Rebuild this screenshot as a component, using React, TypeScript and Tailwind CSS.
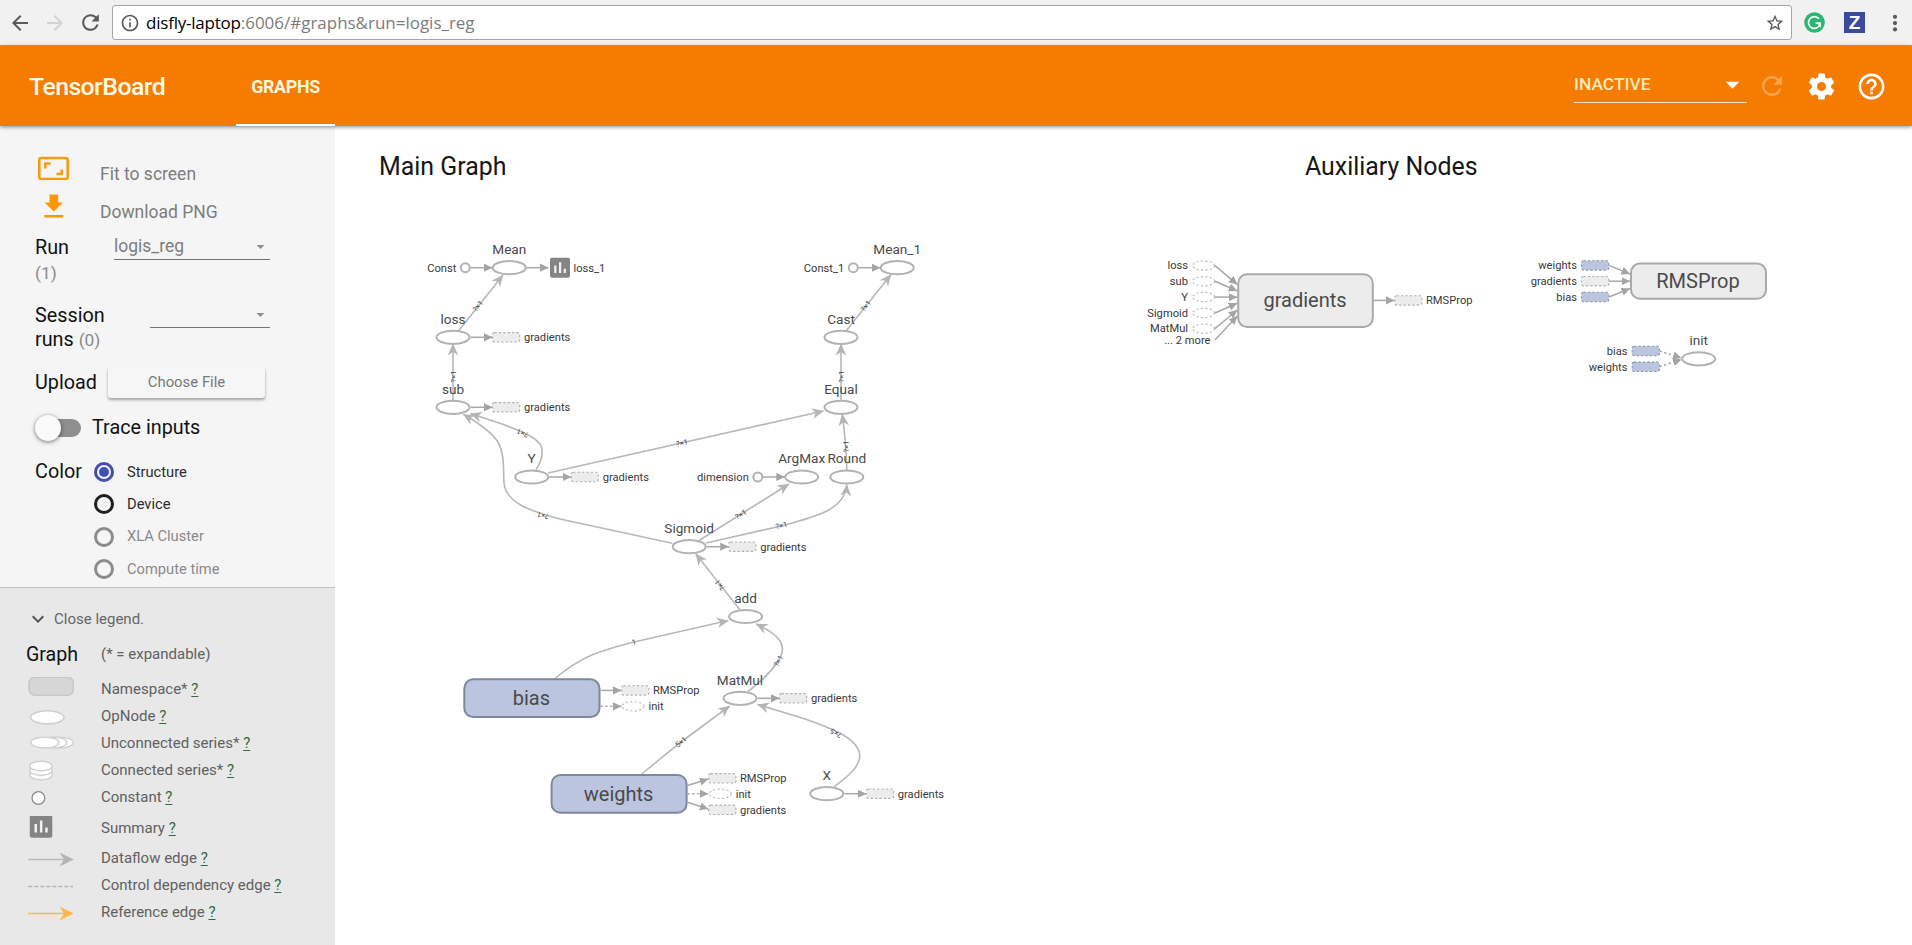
import React from "react";
import {
  MdArrowBack,
  MdArrowForward,
  MdArrowDropDown,
  MdExpandMore,
  MdHelpOutline,
  MdInfoOutline,
  MdRefresh,
  MdStarBorder,
} from "react-icons/md";

const GEAR =
  "M19.43 12.98c.04-.32.07-.64.07-.98s-.03-.66-.07-.98l2.11-1.65c.19-.15.24-.42.12-.64l-2-3.46c-.12-.22-.39-.3-.61-.22l-2.49 1c-.52-.4-1.08-.73-1.69-.98l-.38-2.65C14.46 2.18 14.25 2 14 2h-4c-.25 0-.46.18-.49.42l-.38 2.65c-.61.25-1.17.59-1.69.98l-2.49-1c-.23-.09-.49 0-.61.22l-2 3.46c-.13.22-.07.49.12.64l2.11 1.65c-.04.32-.07.65-.07.98s.03.66.07.98l-2.11 1.65c-.19.15-.24.42-.12.64l2 3.46c.12.22.39.3.61.22l2.49-1c.52.4 1.08.73 1.69.98l.38 2.65c.03.24.24.42.49.42h4c.25 0 .46-.18.49-.42l.38-2.65c.61-.25 1.17-.59 1.69-.98l2.49 1c.23.09.49 0 .61-.22l2-3.46c.12-.22.07-.49-.12-.64l-2.11-1.65zM12 15.5c-1.93 0-3.5-1.57-3.5-3.5s1.57-3.5 3.5-3.5 3.5 1.57 3.5 3.5-1.57 3.5-3.5 3.5z";

/* ---------- Browser toolbar ---------- */

function BrowserBar() {
  return (
    <div className="flex h-[46px] shrink-0 items-center border-b border-[#a9a9a9] bg-[#f1f1f1] text-[#5a5a5a]">
      <MdArrowBack className="ml-2 size-6 shrink-0" />
      <MdArrowForward className="ml-[11px] size-6 shrink-0 text-[#d2d2d2]" />
      <MdRefresh className="ml-[11px] size-[25px] shrink-0" />
      <div className="ml-[9px] flex h-[35px] w-[1680px] shrink-0 items-center rounded-[3px] border border-[#a6a6a6] bg-white">
        <MdInfoOutline className="ml-[7px] size-[20px] shrink-0" />
        <span className="ml-[6px] font-['Open_Sans','Noto_Sans',sans-serif] text-[17px] leading-none tracking-[-0.02px] whitespace-nowrap text-[#7c7c7c]">
          <span className="tracking-[-0.22px] text-black">disfly-laptop</span>:6006/#graphs&amp;run=logis_reg
        </span>
        <MdStarBorder className="mr-[6px] ml-auto size-[20px] shrink-0" />
      </div>
      <svg className="ml-[12px] size-[21px] shrink-0" viewBox="0 0 21 21">
        <circle cx="10.5" cy="10.5" r="10.3" fill="#2bb673" />
        <path d="M15 6.8A5.9 5.9 0 1 0 16 12.4V11.2H11.6" fill="none" stroke="#fff" strokeWidth="1.7" />
        <path d="M13.2 12.4h3.6v3.4z" fill="#fff" />
      </svg>
      <div className="ml-[19px] flex size-[21px] shrink-0 items-center justify-center bg-[#3c4a9e] font-['Liberation_Sans',sans-serif] text-[19px] leading-none font-bold text-white">
        Z
      </div>
      <svg className="ml-[26px] h-[18px] w-[8px] shrink-0" viewBox="0 0 8 18" fill="#5a5a5a">
        <circle cx="4" cy="2.8" r="2.1" />
        <circle cx="4" cy="9.1" r="2.1" />
        <circle cx="4" cy="15.4" r="2.1" />
      </svg>
    </div>
  );
}

/* ---------- App header ---------- */

function Header() {
  return (
    <header className="relative z-10 flex h-20 shrink-0 items-center bg-[#f57c00] text-white shadow-[0_1px_4px_rgba(0,0,0,0.45)]">
      <h1 className="ml-[29px] w-[207px] pt-[2px] text-[24.8px] leading-none font-medium tracking-[-0.55px] text-[#fffbea]">
        TensorBoard
      </h1>
      <div className="flex h-full w-[99px] items-center justify-center border-b-2 border-white pt-[4px] text-[17.8px] leading-none font-bold tracking-[-0.3px] text-[#fff6de]">
        GRAPHS
      </div>
      <div className="ml-auto flex h-[34px] w-[173px] items-center border-b border-[#fde3c4] pb-[2px]">
        <span className="pt-px text-[17.4px] leading-none font-medium text-[#ffe7bd]">INACTIVE</span>
        <MdArrowDropDown className="mr-[-2px] ml-auto size-[33px]" />
      </div>
      <MdRefresh className="ml-[10px] size-[30px] text-white/30" />
      <svg className="ml-[19px] size-[31px]" viewBox="0 0 24 24" fill="currentColor">
        <path d={GEAR} />
      </svg>
      <MdHelpOutline className="mr-[25px] ml-[19px] size-[31px]" />
    </header>
  );
}

/* ---------- Sidebar ---------- */

function Radio({ label, state }: { label: string; state: "on" | "off" | "disabled" }) {
  const ring =
    state === "on" ? "border-[#4150ab]" : state === "off" ? "border-[#202020]" : "border-[#8c8c8c]";
  return (
    <div className="flex h-[32.3px] items-center">
      <div className={`flex size-5 items-center justify-center rounded-full border-[3px] ${ring}`}>
        {state === "on" && <div className="size-[10px] rounded-full bg-[#3f51b5]" />}
      </div>
      <span
        className={`ml-[13px] text-[14.7px] leading-none ${state === "disabled" ? "text-[#8a8a8a]" : "text-[#2c2c2c]"}`}
      >
        {label}
      </span>
    </div>
  );
}

function Controls() {
  return (
    <div className="flex h-[461px] shrink-0 flex-col pl-[35px] text-[19.8px] leading-[24px] text-[#111]">
      <div className="mt-[30px] flex h-[26px]">
        <svg className="ml-[3px] h-6 w-[31px]" viewBox="0 0 31 24" fill="none" stroke="#f59b16" strokeWidth="2.6">
          <rect x="1.3" y="2" width="28.4" height="21" rx="2" />
          <path d="M7.3 12.5V7.5H12.6M23.7 13.5V18H18.4" />
        </svg>
        <span className="mt-[6px] ml-[31px] text-[17.5px] text-[#7d7d7d]">Fit to screen</span>
      </div>
      <div className="mt-[11px] flex h-[26px]">
        <svg className="ml-[9px] h-[26px] w-[20px]" viewBox="0 0 20 26" fill="#ff9800">
          <path d="M5.5 1.5h8.6v8H19L9.8 18.6.6 9.5h4.9zM.3 22h19v2.6H.3z" />
        </svg>
        <span className="mt-[7px] ml-[36px] text-[17.5px] text-[#7d7d7d]">Download PNG</span>
      </div>
      <div className="mt-[15px] flex h-[68px]">
        <div className="mt-[2px] w-[79px]">
          Run
          <div className="mt-[1px] text-[17.3px] text-[#8a8a8a]">(1)</div>
        </div>
        <div className="flex h-[26px] w-[156px] items-center border-b border-[#757575] pb-[1px] text-[17.5px] text-[#7d7d7d]">
          logis_reg
          <MdArrowDropDown className="mr-0 ml-auto size-[19px] text-[#8f8f8f]" />
        </div>
      </div>
      <div className="flex h-[63px]">
        <div className="mt-[2px] w-[115px]">
          Session
          <br />
          runs <span className="text-[17.3px] text-[#8a8a8a]">(0)</span>
        </div>
        <div className="flex h-[26px] w-[120px] items-center border-b border-[#757575] pb-[1px]">
          <MdArrowDropDown className="ml-auto size-[19px] text-[#8f8f8f]" />
        </div>
      </div>
      <div className="mt-[1px] flex h-[32px] items-center">
        <span className="w-[73px] pt-[2px]">Upload</span>
        <button className="h-[31px] w-[157px] rounded-[3px] bg-[#f6f6f6] text-[14.9px] leading-none text-[#7a7a7a] shadow-[0_2px_3px_rgba(0,0,0,0.35)]">
          Choose File
        </button>
      </div>
      <div className="mt-[14px] flex h-[32px] items-center">
        <div className="flex h-[18px] w-[46px] items-center rounded-full bg-linear-to-r from-transparent from-30% to-[#8f8f8f] to-30%">
          <div className="size-[26px] shrink-0 rounded-full bg-[#fafafa] shadow-[0_1px_4px_rgba(0,0,0,0.55)]" />
        </div>
        <span className="ml-[11px]">Trace inputs</span>
      </div>
      <div className="mt-[12px] flex">
        <span className="mt-[4px] w-[59px]">Color</span>
        <div className="flex flex-col">
          <Radio label="Structure" state="on" />
          <Radio label="Device" state="off" />
          <Radio label="XLA Cluster" state="disabled" />
          <Radio label="Compute time" state="disabled" />
        </div>
      </div>
    </div>
  );
}

function SummaryGlyph({ x, y, size }: { x: number; y: number; size: number }) {
  return (
    <g transform={`translate(${x} ${y}) scale(${size / 20})`}>
      <rect width="20" height="20" rx="2" fill="#848484" />
      <path d="M4.2 7.8h2.2v7.6H4.2zM9 4.6h2.2v10.8H9zM13.7 11h2.2v4.4h-2.2z" fill="#f2f2f2" />
    </g>
  );
}

function LegendRow({
  label,
  h,
  children,
}: {
  label: string;
  h: string;
  children: React.ReactNode;
}) {
  return (
    <div className={`flex items-center ${h}`}>
      <svg className="h-6 w-[48px]" viewBox="0 0 48 24">
        {children}
      </svg>
      <span className="ml-[27px] text-[15px] leading-none whitespace-nowrap text-[#606060]">
        {label} <a className="text-[#2f6b3f] underline underline-offset-2">?</a>
      </span>
    </div>
  );
}

function Legend() {
  return (
    <div className="flex grow flex-col border-t border-[#c2c2c2] bg-[#e8e8e8] pl-[26px]">
      <div className="mt-[19px] flex h-[24px] items-center text-[15px] leading-none text-[#666]">
        <MdExpandMore className="size-[24px] text-[#555]" />
        <span className="ml-[4px]">Close legend.</span>
      </div>
      <div className="mt-[11px] flex h-[24px] items-center">
        <span className="w-[75px] pt-px text-[19.6px] leading-none text-[#111]">Graph</span>
        <span className="text-[15px] leading-none text-[#606060]">(* = expandable)</span>
      </div>
      <div className="mt-[9px] flex flex-col">
        <LegendRow label="Namespace*" h="h-[28px]">
          <rect x="3" y="0.2" width="44.5" height="18" rx="6" fill="#d6d6d6" stroke="#c8c8c8" strokeWidth="1.6" />
        </LegendRow>
        <LegendRow label="OpNode" h="h-[27px]">
          <ellipse cx="21.3" cy="12.3" rx="16.8" ry="6.6" fill="#fff" stroke="#cfcfcf" strokeWidth="1.6" />
        </LegendRow>
        <LegendRow label="Unconnected series*" h="h-[27px]">
          {[33.3, 27, 19].map((cx) => (
            <ellipse key={cx} cx={cx} cy="10.5" rx="14" ry="5.4" fill="#fff" stroke="#cfcfcf" strokeWidth="1.4" />
          ))}
        </LegendRow>
        <LegendRow label="Connected series*" h="h-[27px]">
          {[16, 11.5, 7].map((cy) => (
            <ellipse key={cy} cx="15" cy={cy} rx="11.2" ry="4.8" fill="#fff" stroke="#cfcfcf" strokeWidth="1.4" />
          ))}
        </LegendRow>
        <LegendRow label="Constant" h="h-[27px]">
          <circle cx="12.4" cy="12" r="6.4" fill="#fff" stroke="#888" strokeWidth="1.2" />
        </LegendRow>
        <LegendRow label="Summary" h="h-[34px]">
          <SummaryGlyph x={3.8} y={-0.8} size={22.5} />
        </LegendRow>
        <LegendRow label="Dataflow edge" h="h-[27px]">
          <path d="M2.3 12.5H38" stroke="#b9b9b9" strokeWidth="1.6" />
          <path d="M47.8 12.5L33.5 5.5L38 12.5L33.5 19.5Z" fill="#b4b4b4" />
        </LegendRow>
        <LegendRow label="Control dependency edge" h="h-[27px]">
          <path d="M2.3 12.5H47" stroke="#b5b5b5" strokeWidth="1.4" strokeDasharray="4 2" />
        </LegendRow>
        <LegendRow label="Reference edge" h="h-[27px]">
          <path d="M2.3 12.5H38" stroke="#ffb74d" strokeWidth="1.6" />
          <path d="M47.8 12.5L33.5 5.5L38 12.5L33.5 19.5Z" fill="#ffb74d" />
        </LegendRow>
      </div>
    </div>
  );
}

/* ---------- Graph ---------- */

const OPS: [string, number, number][] = [
  ["Mean", 509.3, 267.7],
  ["loss", 453, 337.3],
  ["sub", 453, 407.3],
  ["Y", 531.7, 477],
  ["Sigmoid", 689.2, 546.7],
  ["ArgMax", 801.7, 477],
  ["Round", 846.8, 477],
  ["Equal", 841, 407.3],
  ["Cast", 841, 337.3],
  ["Mean_1", 897.2, 267.7],
  ["add", 745.6, 616.5],
  ["MatMul", 740, 698.3],
  ["X", 826.8, 793.7],
  ["init", 1698.7, 358.8],
];

const GRADIENT_OUTS: [number, number][] = [
  [453, 337.3],
  [453, 407.3],
  [531.7, 477],
  [689.2, 546.7],
  [740, 698.3],
  [826.8, 793.7],
];

const CONSTS: [string, number, number][] = [
  ["Const", 465.3, 267.7],
  ["Const_1", 853.3, 267.7],
  ["dimension", 757.8, 477],
];

const EDGES = [
  "M458.5 331L503 275",
  "M453 400.5V344",
  "M536 469.5C541 462 544 454 541 446C536 436 517 430 505 425L470.5 413.5",
  "M672.3 543.3L560 519C530 511 506 503 504 483C503 468 505 455 498 442C490 430 475 421 463.3 414.3",
  "M548 473L823.5 411",
  "M846.8 470C846.5 450 845 435 842.3 414.3",
  "M841 400.5V344",
  "M846 331L891 274.5",
  "M699 540.5L789 484",
  "M706 543L781 526C815 517 845 510 846.8 484.5",
  "M739.7 609.5L695.7 553.8",
  "M555 678.5C583 655 603 650 634 642L728.3 620.5",
  "M748 691.5C765 679 773 669 779 660C787 646 782 636 756 624",
  "M641.7 774L681 742L729.7 706",
  "M834.5 786.5C850 775 860 766 859.8 755C858 738 831 728 805 719Q780 711 757.5 704.5",
];

const SHAPES: [string, number, number, number][] = [
  ["?×1", 478, 306, -51],
  ["?×1", 453, 376.5, -90],
  ["?×1", 522.5, 433, 203],
  ["?×1", 543, 515.3, 194],
  ["?×1", 682, 443, -12],
  ["?×1", 846.3, 446.5, -93],
  ["?×1", 841, 376.5, -90],
  ["?×1", 866, 306, -51],
  ["?×1", 741, 514.5, -32],
  ["?×1", 781.5, 525.5, -13],
  ["?×1", 720, 585, 232],
  ["1", 634, 642, -13],
  ["?×1", 778.5, 661, -62],
  ["5×1", 681, 742, -38],
  ["?×5", 836, 733, 207],
];

function Chip({ x, y, blue }: { x: number; y: number; blue?: boolean }) {
  return (
    <rect
      x={x}
      y={y - 4.7}
      width="27.2"
      height="9.4"
      rx="2"
      fill={blue ? "#bcc5df" : "#ececec"}
      stroke={blue ? "#8891ab" : "#adadad"}
      strokeWidth="1.1"
      strokeDasharray="2.2 2.2"
    />
  );
}

function DashedOp({ x, y }: { x: number; y: number }) {
  return (
    <ellipse cx={x} cy={y} rx="11" ry="4.6" fill="#fff" stroke="#bdbdbd" strokeWidth="1.2" strokeDasharray="2.2 2.2" />
  );
}

function Arrow({ d, dashed }: { d: string; dashed?: boolean }) {
  return (
    <path
      d={d}
      fill="none"
      stroke="#a8a8a8"
      strokeWidth="1.5"
      strokeDasharray={dashed ? "2.4 2.4" : undefined}
      markerEnd="url(#tri)"
    />
  );
}

function Small({ x, y, end, children }: { x: number; y: number; end?: boolean; children: React.ReactNode }) {
  return (
    <text x={x} y={y + 3.8} textAnchor={end ? "end" : "start"} fontSize="11.15" fill="#383838">
      {children}
    </text>
  );
}

function Group({
  x,
  y,
  w,
  h,
  label,
  blue,
}: {
  x: number;
  y: number;
  w: number;
  h: number;
  label: string;
  blue?: boolean;
}) {
  return (
    <g>
      <rect
        x={x}
        y={y}
        width={w}
        height={h}
        rx="9"
        fill={blue ? "#bbc5df" : "#ececec"}
        stroke={blue ? "#7f879e" : "#a9a9a9"}
        strokeWidth="2"
      />
      <text x={x + w / 2 - 0.5} y={y + h / 2 + 6.8} textAnchor="middle" fontSize="20" fill="#4a4a4a">
        {label}
      </text>
    </g>
  );
}

function Graph() {
  return (
    <svg className="block h-[819px] w-[1577px]" viewBox="335 126 1577 819">
      <defs>
        <marker id="barb" viewBox="0 0 12 12" refX="11.5" refY="6" markerWidth="12" markerHeight="12" markerUnits="userSpaceOnUse" orient="auto">
          <path d="M0 0.6L11.8 6L0 11.4L3.6 6Z" fill="#b5b5b5" />
        </marker>
        <marker id="tri" viewBox="0 0 9 9" refX="8.5" refY="4.5" markerWidth="9" markerHeight="9" markerUnits="userSpaceOnUse" orient="auto">
          <path d="M0 0.4L8.6 4.5L0 8.6Z" fill="#a4a4a4" />
        </marker>
      </defs>

      <g fontSize="24.9" fill="#161616">
        <text x="379" y="174.7">Main Graph</text>
        <text x="1305" y="174.7">Auxiliary Nodes</text>
      </g>

      {EDGES.map((d) => (
        <path key={d} d={d} fill="none" stroke="#b8b8b8" strokeWidth="1.6" markerEnd="url(#barb)" />
      ))}

      {OPS.map(([name, x, y]) => (
        <g key={name}>
          <ellipse cx={x} cy={y} rx="16.5" ry="6.6" fill="#fff" stroke="#b2b2b2" strokeWidth="2" />
          <text x={x} y={y - 13.6} textAnchor="middle" fontSize="13.6" fill="#4a4a4a">
            {name}
          </text>
        </g>
      ))}

      {SHAPES.map(([t, x, y, a]) => (
        <text key={`${x}-${y}`} transform={`translate(${x} ${y}) rotate(${a})`} y="2.5" textAnchor="middle" fontSize="7.5" fill="#444">
          {t}
        </text>
      ))}

      {CONSTS.map(([name, x, y]) => (
        <g key={name}>
          <Arrow d={`M${x + 5} ${y}H${x + 27}`} />
          <circle cx={x} cy={y} r="4.5" fill="#fff" stroke="#b2b2b2" strokeWidth="2" />
          <Small x={x - 9} y={y} end>
            {name}
          </Small>
        </g>
      ))}

      {GRADIENT_OUTS.map(([x, y]) => (
        <g key={`${x}-${y}`}>
          <Arrow d={`M${x + 17.5} ${y}H${x + 39.5}`} />
          <Chip x={x + 39.5} y={y} />
          <Small x={x + 71} y={y}>gradients</Small>
        </g>
      ))}

      <Arrow d="M526.5 267.7H548.5" />
      <SummaryGlyph x={550} y={257.7} size={20} />
      <Small x={573.5} y={267.7}>loss_1</Small>

      <Group x={464.3} y={679.3} w={135.2} h={37.8} label="bias" blue />
      <Arrow d="M600.5 690.4H621.5" />
      <Chip x={621.7} y={690.4} />
      <Small x={653} y={690.4}>RMSProp</Small>
      <Arrow d="M600.5 706.3H621.5" dashed />
      <DashedOp x={633} y={706.3} />
      <Small x={648.5} y={706.3}>init</Small>

      <Group x={551.6} y={775} w={135} h={37.8} label="weights" blue />
      <Arrow d="M687.5 785.5L708.3 779" />
      <Arrow d="M687.5 793.8H708.3" dashed />
      <Arrow d="M687.5 802.2L708.3 809" />
      <Chip x={708.7} y={778.3} />
      <DashedOp x={720.3} y={793.8} />
      <Chip x={708.7} y={809.8} />
      <Small x={740} y={778.3}>RMSProp</Small>
      <Small x={735.7} y={793.8}>init</Small>
      <Small x={740} y={810}>gradients</Small>

      <Group x={1238.2} y={274.2} w={134.6} h={52.8} label="gradients" />
      {(
        [
          ["loss", 265.6, 284.5],
          ["sub", 281.3, 291],
          ["Y", 297, 297.3],
          ["Sigmoid", 313, 303.2],
          ["MatMul", 328.6, 310],
        ] as [string, number, number][]
      ).map(([name, y, ty]) => (
        <g key={name}>
          <DashedOp x={1203.7} y={y} />
          <Small x={1188} y={y} end>
            {name}
          </Small>
          <Arrow d={`M1215 ${y}L1237.3 ${ty}`} />
        </g>
      ))}
      <Arrow d="M1215 340L1237.3 316" />
      <Small x={1210.5} y={340.2} end>... 2 more</Small>
      <Arrow d="M1373.7 300.4H1394.5" />
      <Chip x={1394.7} y={300.4} />
      <Small x={1426} y={300.4}>RMSProp</Small>

      <Group x={1631} y={263.6} w={135} h={35.2} label="RMSProp" />
      <Arrow d="M1609 265.4L1630 274" />
      <Arrow d="M1609 281.2H1630" />
      <Arrow d="M1609 297L1630 288.5" />
      <Chip x={1581.5} y={265.4} blue />
      <Chip x={1581.5} y={281.2} />
      <Chip x={1581.5} y={297} blue />
      <Small x={1577} y={265.4} end>weights</Small>
      <Small x={1577} y={281.2} end>gradients</Small>
      <Small x={1577} y={297} end>bias</Small>

      <Arrow d="M1659.5 351L1681.5 358" dashed />
      <Arrow d="M1659.5 366.8L1681.5 359.5" dashed />
      <Chip x={1632.2} y={351} blue />
      <Chip x={1632.2} y={366.8} blue />
      <Small x={1627.5} y={351} end>bias</Small>
      <Small x={1627.5} y={366.8} end>weights</Small>
    </svg>
  );
}

export default function App() {
  return (
    <div className="flex h-[945px] w-[1912px] flex-col overflow-hidden bg-white font-['Roboto',sans-serif]">
      <BrowserBar />
      <Header />
      <div className="flex min-h-0 grow">
        <aside className="flex w-[335px] shrink-0 flex-col bg-[#f5f5f5]">
          <Controls />
          <Legend />
        </aside>
        <main className="grow">
          <Graph />
        </main>
      </div>
    </div>
  );
}
